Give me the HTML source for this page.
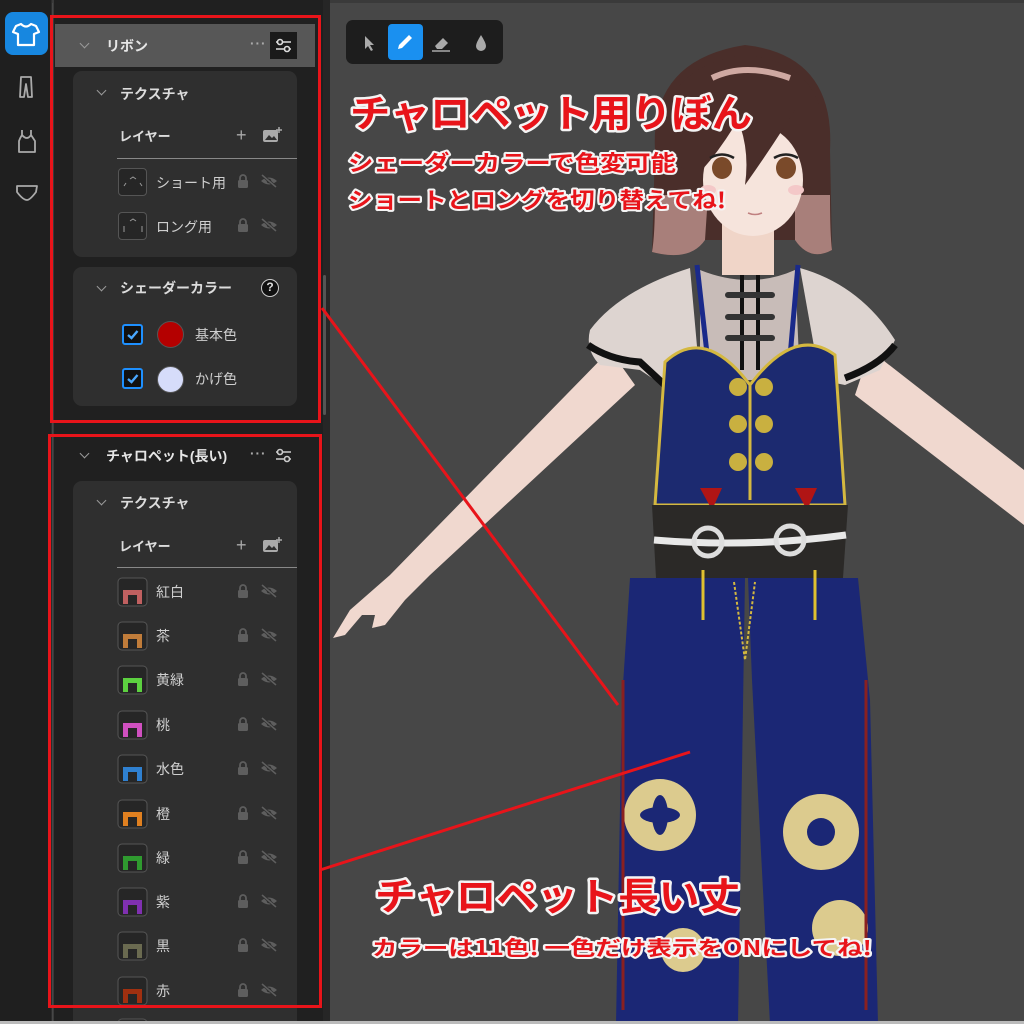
<!DOCTYPE html>
<html style="overflow:hidden;width:1024px;height:1024px"><head><meta charset="utf-8">
<style>
*{margin:0;padding:0;box-sizing:border-box}
body{width:1024px;height:1024px;overflow:hidden;background:#474747;font-family:"Liberation Sans","Noto Sans CJK JP",sans-serif;position:relative}
.abs{position:absolute}
.sidebar{left:0;top:0;width:52px;height:1024px;background:#1f1f1f;border-right:1px solid #2c2c2c}
.panel{left:53px;top:0;width:270px;height:1024px;background:#202020;border-left:1px solid #3a3a3a}
.scroll{left:323px;top:0;width:7px;height:1024px;background:#262626}
.card{position:absolute;left:73px;width:224px;background:#2f2f2f;border-radius:9px}
.t{position:absolute;color:#dcdcdc;font-size:13.5px;font-weight:bold;white-space:nowrap;line-height:1}
.n{position:absolute;color:#cfcfcf;font-size:13.5px;white-space:nowrap;line-height:1}
.chev{position:absolute;width:7px;height:7px;border-right:1.6px solid #9a9a9a;border-bottom:1.6px solid #9a9a9a;transform:rotate(45deg)}
.thumb{position:absolute;left:118px;width:29px;height:28px;border:1px solid #555;border-radius:4px;background:#262626}
</style></head><body>
<div class="abs" style="left:0;top:0;width:1024px;height:3px;background:#3a3a3a"></div>
<div class="abs sidebar"></div>
<div class="abs" style="left:5px;top:12px;width:43px;height:43px;background:#1787e0;border-radius:8px"></div>
<svg class="abs" style="left:0;top:0" width="52" height="220" viewBox="0 0 52 220" fill="none" stroke-linejoin="round">
<path d="M21 24 L16 26 L13 32 L18 34 L18 45 L34 45 L34 34 L39 32 L36 26 L31 24 Q26 29 21 24 Z" stroke="#fff" stroke-width="2.2"/>
<path d="M21 77 L31 77 L32 97 L28 97 L26 84 L24 97 L20 97 Z" stroke="#aaa" stroke-width="1.8"/>
<path d="M22 130 L22 135 Q20 138 19 141 L19 152 L35 152 L35 141 Q33 138 31 135 L31 130 M22 135 Q27 141 31 135" stroke="#aaa" stroke-width="1.8"/>
<path d="M17 186 L37 186 L36 192 Q30 200 27 200 Q23 200 17 192 Z" stroke="#aaa" stroke-width="1.8"/>
</svg>
<div class="abs panel"></div>
<div class="abs scroll"></div>
<div class="abs" style="left:323px;top:275px;width:3px;height:140px;background:#555;border-radius:2px"></div>

<div class="abs" style="left:55px;top:24px;width:260px;height:43px;background:#575757"></div>
<div class="chev" style="left:81px;top:40px"></div>
<div class="t" style="left:106px;top:39px;font-size:14px;color:#e6e6e6">リボン</div>
<div class="t" style="left:250px;top:37px;color:#aaa;letter-spacing:1px">···</div>
<div class="abs" style="left:270px;top:32px;width:27px;height:27px;background:#1a1a1a"></div>
<svg class="abs" style="left:270px;top:32px" width="27" height="27" fill="none" stroke="#ddd" stroke-width="1.6"><path d="M6 10 H21 M6 17 H21"/><circle cx="10" cy="10" r="2.5" fill="#1a1a1a"/><circle cx="17" cy="17" r="2.5" fill="#1a1a1a"/></svg>

<div class="card" style="top:71px;height:186px"></div>
<div class="chev" style="left:98px;top:87px"></div>
<div class="t" style="left:120px;top:87px;font-size:14px">テクスチャ</div>
<div class="t" style="left:119px;top:130px;font-size:13px">レイヤー</div>
<div class="t" style="left:236px;top:126px;font-size:18px;color:#aaa;font-weight:normal">+</div>
<svg class="abs" style="left:262px;top:126px" width="20" height="18"><rect x="1" y="4" width="15" height="12" rx="2" fill="#aaa"/><path d="M3 14 L7 9 L10 12 L12 10 L15 14Z" fill="#2f2f2f"/><path d="M17 1 V7 M14 4 H20" stroke="#aaa" stroke-width="1.5"/></svg>
<div class="abs" style="left:117px;top:158px;width:180px;height:1px;background:#888"></div>

<div class="thumb" style="top:168px"></div><div class="n" style="left:156px;top:176px;font-size:14px">ショート用</div>
<div class="thumb" style="top:212px"></div><div class="n" style="left:156px;top:220px;font-size:14px">ロング用</div>

<div class="card" style="top:267px;height:139px"></div>
<div class="chev" style="left:98px;top:283px"></div>
<div class="t" style="left:120px;top:281px;font-size:14px">シェーダーカラー</div>
<div class="abs" style="left:261px;top:279px;width:18px;height:18px;border-radius:50%;background:#111;border:1.5px solid #ccc;color:#ddd;font-size:12px;font-weight:bold;text-align:center;line-height:15px">?</div>
<div class="abs" style="left:122px;top:324px;width:21px;height:21px;border:2px solid #1e90ff;border-radius:3px;background:#111"></div>
<svg class="abs" style="left:122px;top:324px" width="21" height="21"><path d="M6 11 L9.5 14 L15.5 7" stroke="#4aa8ff" stroke-width="2.4" fill="none"/></svg>
<div class="abs" style="left:157px;top:321px;width:27px;height:27px;border-radius:50%;background:#b40000;border:1.5px solid #555"></div>
<div class="n" style="left:195px;top:328px;font-size:14px">基本色</div>
<div class="abs" style="left:122px;top:368px;width:21px;height:21px;border:2px solid #1e90ff;border-radius:3px;background:#111"></div>
<svg class="abs" style="left:122px;top:368px" width="21" height="21"><path d="M6 11 L9.5 14 L15.5 7" stroke="#4aa8ff" stroke-width="2.4" fill="none"/></svg>
<div class="abs" style="left:157px;top:366px;width:27px;height:27px;border-radius:50%;background:#d6dcfa;border:1.5px solid #555"></div>
<div class="n" style="left:195px;top:372px;font-size:14px">かげ色</div>

<div class="chev" style="left:81px;top:450px"></div>
<div class="t" style="left:106px;top:449px;font-size:14px;color:#e6e6e6">チャロペット(長い)</div>
<div class="t" style="left:250px;top:447px;color:#aaa;letter-spacing:1px">···</div>
<svg class="abs" style="left:270px;top:442px" width="27" height="27" fill="none" stroke="#ccc" stroke-width="1.6"><path d="M6 10 H21 M6 17 H21"/><circle cx="10" cy="10" r="2.5" fill="#202020"/><circle cx="17" cy="17" r="2.5" fill="#202020"/></svg>

<div class="card" style="top:481px;height:543px;border-radius:9px 9px 0 0"></div>
<div class="chev" style="left:98px;top:497px"></div>
<div class="t" style="left:120px;top:496px;font-size:14px">テクスチャ</div>
<div class="t" style="left:119px;top:540px;font-size:13px">レイヤー</div>
<div class="t" style="left:236px;top:536px;font-size:18px;color:#aaa;font-weight:normal">+</div>
<svg class="abs" style="left:262px;top:536px" width="20" height="18"><rect x="1" y="4" width="15" height="12" rx="2" fill="#aaa"/><path d="M3 14 L7 9 L10 12 L12 10 L15 14Z" fill="#2f2f2f"/><path d="M17 1 V7 M14 4 H20" stroke="#aaa" stroke-width="1.5"/></svg>
<div class="abs" style="left:117px;top:567px;width:180px;height:1px;background:#888"></div>

<svg class="abs" style="left:0;top:0" width="330" height="1024">
<defs>
<g id="lk"><rect x="-5" y="-2" width="10" height="8" rx="1.5" fill="#5e5e5e"/><path d="M-3 -2 V-4 A3 3 0 0 1 3 -4 V-2" stroke="#5e5e5e" stroke-width="1.8" fill="none"/></g>
<g id="ey"><path d="M-8 0 Q0 -7 8 0 Q0 7 -8 0Z" fill="#5e5e5e"/><circle r="2.3" fill="#2f2f2f"/><path d="M-7 -6 L7 6" stroke="#2f2f2f" stroke-width="3"/><path d="M-7 -6 L7 6" stroke="#5e5e5e" stroke-width="1.5"/></g>
</defs>
<use href="#lk" x="243" y="182"/><use href="#ey" x="269" y="181"/>
<use href="#lk" x="243" y="226"/><use href="#ey" x="269" y="225"/>
<path d="M124 186 L126 183 M130 179 L133 177 L136 179 M140 183 L142 186" stroke="#999" stroke-width="1" fill="none"/>
<path d="M124 226 L124 232 M130 221 L133 219 L136 221 M142 226 L142 232" stroke="#999" stroke-width="1" fill="none"/>
<g>
<rect x="118" y="578" width="29" height="28" rx="4" fill="#262626" stroke="#555"/><path d="M123 604 V590 H142 V604 H137 V595 H128 V604Z" fill="#c06060"/><use href="#lk" x="243" y="592"/><use href="#ey" x="269" y="591"/>
<rect x="118" y="622" width="29" height="28" rx="4" fill="#262626" stroke="#555"/><path d="M123 648 V634 H142 V648 H137 V639 H128 V648Z" fill="#c07c3a"/><use href="#lk" x="243" y="636"/><use href="#ey" x="269" y="635"/>
<rect x="118" y="666" width="29" height="28" rx="4" fill="#262626" stroke="#555"/><path d="M123 692 V678 H142 V692 H137 V683 H128 V692Z" fill="#5cd040"/><use href="#lk" x="243" y="680"/><use href="#ey" x="269" y="679"/>
<rect x="118" y="711" width="29" height="28" rx="4" fill="#262626" stroke="#555"/><path d="M123 737 V723 H142 V737 H137 V728 H128 V737Z" fill="#d050c0"/><use href="#lk" x="243" y="725"/><use href="#ey" x="269" y="724"/>
<rect x="118" y="755" width="29" height="28" rx="4" fill="#262626" stroke="#555"/><path d="M123 781 V767 H142 V781 H137 V772 H128 V781Z" fill="#2f80d0"/><use href="#lk" x="243" y="769"/><use href="#ey" x="269" y="768"/>
<rect x="118" y="800" width="29" height="28" rx="4" fill="#262626" stroke="#555"/><path d="M123 826 V812 H142 V826 H137 V817 H128 V826Z" fill="#e08020"/><use href="#lk" x="243" y="814"/><use href="#ey" x="269" y="813"/>
<rect x="118" y="844" width="29" height="28" rx="4" fill="#262626" stroke="#555"/><path d="M123 870 V856 H142 V870 H137 V861 H128 V870Z" fill="#2f9a2f"/><use href="#lk" x="243" y="858"/><use href="#ey" x="269" y="857"/>
<rect x="118" y="888" width="29" height="28" rx="4" fill="#262626" stroke="#555"/><path d="M123 914 V900 H142 V914 H137 V905 H128 V914Z" fill="#8030b0"/><use href="#lk" x="243" y="902"/><use href="#ey" x="269" y="901"/>
<rect x="118" y="932" width="29" height="28" rx="4" fill="#262626" stroke="#555"/><path d="M123 958 V944 H142 V958 H137 V949 H128 V958Z" fill="#6a6a50"/><use href="#lk" x="243" y="946"/><use href="#ey" x="269" y="945"/>
<rect x="118" y="977" width="29" height="28" rx="4" fill="#262626" stroke="#555"/><path d="M123 1003 V989 H142 V1003 H137 V994 H128 V1003Z" fill="#a03010"/><use href="#lk" x="243" y="991"/><use href="#ey" x="269" y="990"/>
<rect x="118" y="1019" width="29" height="28" rx="4" fill="#262626" stroke="#555"/>
</g>
</svg>
<div class="n" style="left:156px;top:585px;font-size:14px">紅白</div>
<div class="n" style="left:156px;top:629px;font-size:14px">茶</div>
<div class="n" style="left:156px;top:673px;font-size:14px">黄緑</div>
<div class="n" style="left:156px;top:718px;font-size:14px">桃</div>
<div class="n" style="left:156px;top:762px;font-size:14px">水色</div>
<div class="n" style="left:156px;top:807px;font-size:14px">橙</div>
<div class="n" style="left:156px;top:851px;font-size:14px">緑</div>
<div class="n" style="left:156px;top:895px;font-size:14px">紫</div>
<div class="n" style="left:156px;top:939px;font-size:14px">黒</div>
<div class="n" style="left:156px;top:984px;font-size:14px">赤</div>

<div class="abs" style="left:346px;top:20px;width:157px;height:44px;background:#1d1d1d;border-radius:7px"></div>
<div class="abs" style="left:388px;top:24px;width:35px;height:36px;background:#1a90f0;border-radius:4px"></div>
<svg class="abs" style="left:346px;top:20px" width="157" height="44">
<path d="M19 16 L19 29 L22 26 L25 31 L27 30 L24 25 L28 25 Z" fill="#aaa"/>
<path d="M52 29 L53 25 L63 15 L66 18 L56 28 Z" fill="#fff"/>
<path d="M89 26 L97 18 L102 23 L96 29 L91 29 Z" fill="#aaa"/><path d="M86 31 H104" stroke="#aaa" stroke-width="1.5"/>
<path d="M135 15 Q130 23 130 26 A5 5 0 0 0 140 26 Q140 23 135 15Z" fill="#aaa"/>
</svg>

<svg class="abs" style="left:0;top:0" width="1024" height="1024">
<path d="M610 350 L635 385 L430 575 L405 600 L385 625 L372 628 L375 615 L362 615 L345 635 L333 638 L350 610 L390 575 Z" fill="#f0d8cf"/>
<path d="M870 350 L1024 470 L1024 525 L855 395 Z" fill="#f0d8cf"/>
<path d="M655 150 Q650 60 745 45 Q835 55 830 150 L832 250 Q810 262 795 240 L700 240 Q690 262 652 252 Z" fill="#4a2e2a"/>
<path d="M655 195 Q655 235 652 252 Q690 262 705 240 L708 195Z M830 195 Q830 235 832 250 Q810 262 795 240 L795 195Z" fill="#a87f7a"/>
<rect x="722" y="220" width="52" height="55" fill="#f0d5c8"/>
<ellipse cx="753" cy="180" rx="50" ry="56" fill="#f6e4dc"/>
<path d="M660 150 Q660 65 745 55 Q828 62 825 150 L805 170 L795 110 Q770 150 745 185 Q750 150 738 120 Q720 150 702 170 Q698 140 690 130 L685 170 Z" fill="#4a2e2a"/>
<path d="M712 78 Q745 62 790 78" stroke="#cfa9a2" stroke-width="6" fill="none"/>
<ellipse cx="722" cy="168" rx="10" ry="11" fill="#7a4a2a"/><ellipse cx="786" cy="168" rx="10" ry="11" fill="#7a4a2a"/>
<path d="M710 158 Q722 151 734 158 M774 158 Q786 151 798 158" stroke="#222" stroke-width="2.5" fill="none"/>
<ellipse cx="708" cy="190" rx="8" ry="5" fill="#f4c8c8"/><ellipse cx="796" cy="190" rx="8" ry="5" fill="#f4c8c8"/>
<path d="M748 213 Q755 216 762 213" stroke="#c08080" stroke-width="1.5" fill="none"/>
<path d="M590 330 Q620 290 690 268 L700 380 L670 390 L640 370 L600 365 Q585 350 590 330Z" fill="#ddd4d0"/>
<path d="M588 345 Q610 360 640 362 L668 388" stroke="#111" stroke-width="7" fill="none"/>
<path d="M800 268 Q860 285 895 340 L880 370 L845 385 L820 380 Z" fill="#ddd4d0"/>
<path d="M895 345 Q880 365 845 378" stroke="#111" stroke-width="7" fill="none"/>
<path d="M700 270 Q750 290 795 270 L800 380 L700 380Z" fill="#c8bcb8"/>
<path d="M742 275 V370 M758 275 V370" stroke="#111" stroke-width="4"/>
<path d="M728 295 H772 M728 317 H772 M728 338 H772" stroke="#333" stroke-width="6" stroke-linecap="round"/>
<path d="M697 265 L710 380 M798 265 L788 380" stroke="#1a2a8a" stroke-width="5"/>
<path d="M665 362 Q705 325 750 385 Q795 325 835 355 L845 505 L655 505 Z" fill="#1c2a70" stroke="#d4b840" stroke-width="3"/>
<path d="M750 385 V500" stroke="#d4b840" stroke-width="3"/>
<g fill="#c9b040"><circle cx="738" cy="387" r="9"/><circle cx="764" cy="387" r="9"/><circle cx="738" cy="424" r="9"/><circle cx="764" cy="424" r="9"/><circle cx="738" cy="462" r="9"/><circle cx="764" cy="462" r="9"/></g>
<path d="M700 488 L712 510 L722 488 Z M795 488 L807 510 L817 488 Z" fill="#b01515"/>
<path d="M652 505 L848 505 L843 578 L656 578 Z" fill="#2b2927"/>
<path d="M654 540 Q750 548 846 535" stroke="#e8e8e8" stroke-width="7" fill="none"/>
<circle cx="708" cy="542" r="14" fill="none" stroke="#ddd" stroke-width="5"/><circle cx="790" cy="540" r="14" fill="none" stroke="#ddd" stroke-width="5"/>
<path d="M630 578 L745 578 L738 1024 L616 1024 L622 700 Z" fill="#1b2775"/>
<path d="M748 578 L858 578 L870 700 L878 1024 L770 1024 L752 680 Z" fill="#1b2775"/>
<path d="M734 582 L745 660 L755 582" stroke="#d4b840" stroke-width="2" stroke-dasharray="3 2" fill="none"/>
<path d="M703 570 V620 M815 570 V620" stroke="#e0c030" stroke-width="3"/>
<g fill="#dccb8e"><circle cx="660" cy="815" r="36"/><circle cx="821" cy="832" r="38"/><circle cx="840" cy="928" r="28"/><circle cx="683" cy="950" r="22"/></g>
<g fill="#1b2775"><ellipse cx="660" cy="815" rx="8" ry="20"/><ellipse cx="660" cy="815" rx="20" ry="8"/><circle cx="821" cy="832" r="14"/></g>
<path d="M623 680 V1010 M866 680 V1010" stroke="#8a2020" stroke-width="3"/>
</svg>

<svg class="abs" style="left:0;top:0" width="1024" height="1024">
<rect x="51.5" y="16.5" width="268" height="405" fill="none" stroke="#e8141a" stroke-width="3"/>
<rect x="49.5" y="435.5" width="271" height="571" fill="none" stroke="#e8141a" stroke-width="3"/>
<path d="M322 308 L618 705" stroke="#e8141a" stroke-width="3"/>
<path d="M320 870 L690 752" stroke="#e8141a" stroke-width="3"/>
<g font-family="'Noto Sans CJK JP',sans-serif" font-weight="bold" fill="#e8141a" stroke="#f4f4f4" stroke-linejoin="round" paint-order="stroke">
<text x="350" y="127" font-size="38" stroke-width="5" textLength="402" lengthAdjust="spacingAndGlyphs">チャロペット用りぼん</text>
<text x="348" y="171" font-size="22" stroke-width="4" textLength="328" lengthAdjust="spacingAndGlyphs">シェーダーカラーで色変可能</text>
<text x="348" y="208" font-size="22" stroke-width="4" textLength="378" lengthAdjust="spacingAndGlyphs">ショートとロングを切り替えてね!</text>
<text x="375" y="910" font-size="38" stroke-width="5" textLength="365" lengthAdjust="spacingAndGlyphs">チャロペット長い丈</text>
<text x="372" y="955" font-size="20" stroke-width="4" textLength="500" lengthAdjust="spacingAndGlyphs">カラーは11色! 一色だけ表示をONにしてね!</text>
</g>
</svg>
<div class="abs" style="left:0;top:1021px;width:1024px;height:3px;background:#bbb"></div>
</body></html>
